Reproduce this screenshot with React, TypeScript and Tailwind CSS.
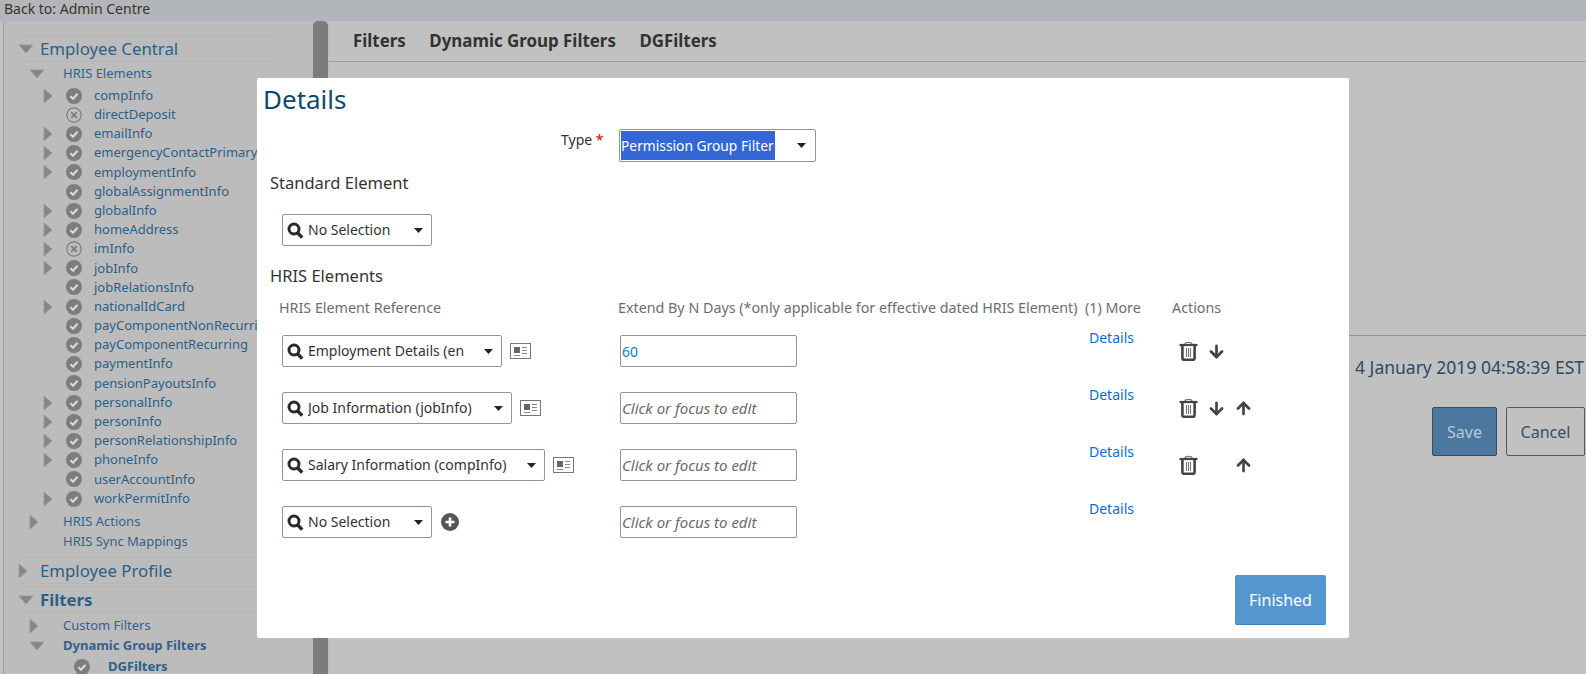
import React from 'react';
import { ArrowDown, ArrowUp } from 'lucide-react';

const FONT = "font-['Noto_Sans',sans-serif]";

type TreeRow = { name: string; arrow?: boolean; off?: boolean };

const HRIS_ROWS: TreeRow[] = [
  { name: 'compInfo', arrow: true },
  { name: 'directDeposit', off: true },
  { name: 'emailInfo', arrow: true },
  { name: 'emergencyContactPrimary', arrow: true },
  { name: 'employmentInfo', arrow: true },
  { name: 'globalAssignmentInfo' },
  { name: 'globalInfo', arrow: true },
  { name: 'homeAddress', arrow: true },
  { name: 'imInfo', arrow: true, off: true },
  { name: 'jobInfo', arrow: true },
  { name: 'jobRelationsInfo' },
  { name: 'nationalIdCard', arrow: true },
  { name: 'payComponentNonRecurring' },
  { name: 'payComponentRecurring' },
  { name: 'paymentInfo' },
  { name: 'pensionPayoutsInfo' },
  { name: 'personalInfo', arrow: true },
  { name: 'personInfo', arrow: true },
  { name: 'personRelationshipInfo', arrow: true },
  { name: 'phoneInfo', arrow: true },
  { name: 'userAccountInfo' },
  { name: 'workPermitInfo', arrow: true },
];

const TriRight = () => (
  <svg width="10" height="16" viewBox="0 0 10 16" className="shrink-0">
    <path d="M1 1 L9 8 L1 15 Z" fill="#858585" stroke="#9a9a9a" strokeWidth="1" />
  </svg>
);

const TriDown = () => (
  <svg width="16" height="10" viewBox="0 0 16 10" className="shrink-0">
    <path d="M1 1 L15 1 L8 9 Z" fill="#858585" stroke="#9a9a9a" strokeWidth="1" />
  </svg>
);

const StatusOn = () => (
  <svg width="16" height="16" viewBox="0 0 16 16" className="shrink-0">
    <circle cx="8" cy="8" r="8" fill="#7d7d7d" />
    <path d="M4.4 8.2 L7 10.7 L11.6 5.8" fill="none" stroke="#d8d8d8" strokeWidth="2.2" />
  </svg>
);

const StatusOff = () => (
  <svg width="16" height="16" viewBox="0 0 16 16" className="shrink-0">
    <circle cx="8" cy="8" r="7.2" fill="none" stroke="#7d7d7d" strokeWidth="1.2" />
    <path d="M5.2 5.2 L10.8 10.8 M10.8 5.2 L5.2 10.8" stroke="#7d7d7d" strokeWidth="1.8" />
  </svg>
);

const Search = () => (
  <svg width="17" height="17" viewBox="0 0 17 17" className="shrink-0">
    <circle cx="7" cy="7" r="5" fill="none" stroke="#2a2a2a" strokeWidth="3" />
    <path d="M10.5 10.8 L15.2 15.6" stroke="#2a2a2a" strokeWidth="3.4" />
  </svg>
);

const Caret = () => (
  <svg width="9" height="5" viewBox="0 0 9 5" className="shrink-0">
    <path d="M0 0 H9 L4.5 5 Z" fill="#222" />
  </svg>
);

const CardIcon = () => (
  <svg width="21" height="16" viewBox="0 0 21 16" className="shrink-0">
    <rect x="0.5" y="0.5" width="20" height="15" fill="#fff" stroke="#777" />
    <rect x="4" y="4" width="6" height="6" fill="#666" />
    <path d="M12 4.5 H17 M12 7.5 H17 M12 10.5 H17 M4 12.5 H10" stroke="#888" strokeWidth="1" />
  </svg>
);

const PlusIcon = () => (
  <svg width="18" height="18" viewBox="0 0 18 18" className="shrink-0 ml-[1px]">
    <circle cx="9" cy="9" r="9" fill="#555" />
    <path d="M9 4.5 V13.5 M4.5 9 H13.5" stroke="#fff" strokeWidth="2.6" />
  </svg>
);

const TrashIcon = () => (
  <svg width="19" height="20" viewBox="0 0 19 20" className="shrink-0">
    <path d="M6 3 C6 0.8 13 0.8 13 3" fill="none" stroke="#777" strokeWidth="1.2" />
    <path d="M0.5 4 H18.5" stroke="#444" strokeWidth="2.2" />
    <path d="M3.4 5 V17 C3.4 18.2 4 18.8 5 18.8 H14 C15 18.8 15.6 18.2 15.6 17 V5" fill="none" stroke="#444" strokeWidth="2.6" />
    <path d="M7.5 7 V16 M9.5 7 V16 M11.5 7 V16" stroke="#777" strokeWidth="1.1" />
  </svg>
);

const Section = ({ label, open, bold }: { label: string; open?: boolean; bold?: boolean }) => (
  <div className="flex items-center h-[27px] ml-[14px] w-[258px] border-y border-[#b6b6b6]">
    <div className="w-[22px] flex">{open ? <TriDown /> : <TriRight />}</div>
    <span className={`text-[16.8px] text-[#2c6087] ${bold ? 'font-bold' : ''}`}>{label}</span>
  </div>
);

const SubRow = ({ label, open, arrow, bold }: { label: string; open?: boolean; arrow?: boolean; bold?: boolean }) => (
  <div className="flex items-center h-[20px] pl-[25px]">
    <div className="w-[34px] flex">{open ? <TriDown /> : arrow ? <TriRight /> : null}</div>
    <span className={`text-[13px] text-[#36608a] ${bold ? 'font-bold' : ''}`}>{label}</span>
  </div>
);

const Sidebar = () => (
  <aside className="w-[310px] ml-[3px] shrink-0 pt-[14px] bg-[#bcbcbc] rounded-tl-[3px] border-l border-[#a3a3a3] overflow-hidden">
    <Section label="Employee Central" open />
    <div className="h-[2px]" />
    <SubRow label="HRIS Elements" open />
    <div className="pt-[2px] pb-[4px]">
      {HRIS_ROWS.map((r) => (
        <div key={r.name} className="flex items-center h-[19.2px] pl-[39px]">
          <div className="w-[23px] flex">{r.arrow ? <TriRight /> : null}</div>
          <div className="w-[28px] flex">{r.off ? <StatusOff /> : <StatusOn />}</div>
          <span className="text-[13px] text-[#2c6087] whitespace-nowrap">{r.name}</span>
        </div>
      ))}
    </div>
    <SubRow label="HRIS Actions" arrow />
    <SubRow label="HRIS Sync Mappings" />
    <div className="h-[5px]" />
    <Section label="Employee Profile" />
    <div className="h-[2px]" />
    <Section label="Filters" open bold />
    <div className="h-[3px]" />
    <SubRow label="Custom Filters" arrow />
    <SubRow label="Dynamic Group Filters" open bold />
    <div className="flex items-center h-[22px] pl-[70px]">
      <div className="w-[34px] flex"><StatusOn /></div>
      <span className="text-[13px] font-bold text-[#2c6087]">DGFilters</span>
    </div>
  </aside>
);

const Select = ({ width, label }: { width: string; label: string }) => (
  <div className={`${width} h-[32px] shrink-0 flex items-center pl-[4px] pr-[8px] gap-[4px] bg-white border border-[#8a97a3] rounded-[2px]`}>
    <Search />
    <span className="flex-1 pb-[1px] text-[14px] text-[#333] whitespace-nowrap overflow-hidden">{label}</span>
    <Caret />
  </div>
);

const TextBox = ({ value }: { value?: string }) => (
  <div className="w-[177px] h-[32px] shrink-0 flex items-center px-[1px] bg-white border border-[#8a97a3] rounded-[2px]">
    {value ? (
      <span className="text-[14px] text-[#0a7fb5]">{value}</span>
    ) : (
      <span className="text-[15px] italic text-[#6a6a6a]">Click or focus to edit</span>
    )}
  </div>
);

const ROWS = [
  { select: 'w-[220px]', label: 'Employment Details (en', card: true, value: '60', down: true },
  { select: 'w-[230px]', label: 'Job Information (jobInfo)', card: true, down: true, up: true },
  { select: 'w-[263px]', label: 'Salary Information (compInfo)', card: true, up: true },
  { select: 'w-[150px]', label: 'No Selection', plus: true, last: true },
];

const Dialog = () => (
  <div className="absolute left-[257px] top-[78px] w-[1092px] h-[560px] bg-white rounded-[2px] flex flex-col">
    <h1 className="ml-[6px] mt-[3px] h-[36px] leading-[36px] text-[26px] text-[#0f4a68]">Details</h1>

    <div className="flex items-center mt-[12px] h-[33px]">
      <span className="ml-[304px] w-[58px] text-[14px] text-[#333] -mt-[13px] whitespace-nowrap">
        Type <span className="text-[#c00]">*</span>
      </span>
      <div className="w-[197px] h-[33px] flex items-center justify-between pl-[1px] pr-[9px] bg-white border border-[#8a97a3] rounded-[2px]">
        <span className="h-[29px] leading-[29px] w-[154px] bg-[#3367d6] text-white text-[13.8px] whitespace-nowrap overflow-hidden">Permission Group Filter</span>
        <Caret />
      </div>
    </div>

    <h2 className="ml-[13px] mt-[8px] h-[26px] leading-[26px] text-[16.5px] text-[#333]">Standard Element</h2>

    <div className="ml-[25px] mt-[18px]">
      <Select width="w-[150px]" label="No Selection" />
    </div>

    <h2 className="ml-[13px] mt-[17px] h-[26px] leading-[26px] text-[16.5px] text-[#333]">HRIS Elements</h2>

    <div className="flex items-center h-[20px] mt-[9px] text-[14.3px] text-[#6a6d70] whitespace-nowrap">
      <span className="ml-[22px] w-[339px]">HRIS Element Reference</span>
      <span className="w-[467px]">Extend By N Days (*only applicable for effective dated HRIS Element)</span>
      <span className="w-[87px]">(1) More</span>
      <span>Actions</span>
    </div>

    <div className="mt-[17px] flex flex-col gap-[25px]">
      {ROWS.map((r) => (
        <div key={r.label} className="flex h-[32px]">
          <div className="ml-[25px] w-[338px] flex items-center gap-[8px]">
            <Select width={r.select} label={r.label} />
            {r.card && <CardIcon />}
            {r.plus && <PlusIcon />}
          </div>
          <TextBox value={r.value} />
          <span className="ml-[292px] w-[90px] text-[14px] text-[#0a6ed1] -mt-[8px]">Details</span>
          {!r.last && (
            <div className="flex items-center gap-[9px] h-[32px]">
              <TrashIcon />
              <div className="w-[18px]">{r.down && <ArrowDown size={19} strokeWidth={3.4} className="text-[#444]" />}</div>
              <div className="w-[18px]">{r.up && <ArrowUp size={19} strokeWidth={3.4} className="text-[#444]" />}</div>
            </div>
          )}
        </div>
      ))}
    </div>

    <div className="flex justify-end pr-[23px] mt-[37px]">
      <button className="w-[91px] h-[50px] bg-[#5496d0] border-b border-[#3f80bb] rounded-[2px] text-white text-[16px]">Finished</button>
    </div>
  </div>
);

export default function App() {
  return (
    <div className={`relative w-full h-[674px] overflow-hidden bg-[#c1c1c1] flex flex-col ${FONT}`}>
      <div className="h-[21px] shrink-0 bg-[#b2b5b9] pl-[4px] text-[14px] leading-[18px] text-[#3c3428]">Back to: Admin Centre</div>
      <div className="flex flex-1 min-h-0">
        <Sidebar />
        <div className="w-[16px] shrink-0 bg-[#bcbcbc]">
          <div className="w-[15px] h-full rounded-t-[5px] bg-[#7c7c7c]" />
        </div>
        <main className="flex-1 flex flex-col min-w-0">
          <div className="h-[41px] flex items-center gap-[23.5px] pl-[24px] border-b border-[#9d9d9d] text-[16.9px] font-bold text-[#333]">
            <span>Filters</span>
            <span>Dynamic Group Filters</span>
            <span>DGFilters</span>
          </div>
          <div className="h-[273px]" />
          <div className="border-t border-[#8f8f8f] h-[72px] flex items-center justify-end pr-[2px] pb-[8px] text-[17.5px] text-[#2b4a66] whitespace-nowrap">
            Friday, 4 January 2019 04:58:39 EST
          </div>
          <div className="flex justify-end gap-[9px] pr-[1px]">
            <button className="w-[65px] h-[49px] bg-[#4c77a0] border border-[#3d4a55] rounded-[2px] text-[16px] text-[#b9cad9]">Save</button>
            <button className="w-[79px] h-[49px] border border-[#55595d] rounded-[2px] text-[16px] text-[#34506b]">Cancel</button>
          </div>
        </main>
      </div>
      <Dialog />
    </div>
  );
}
